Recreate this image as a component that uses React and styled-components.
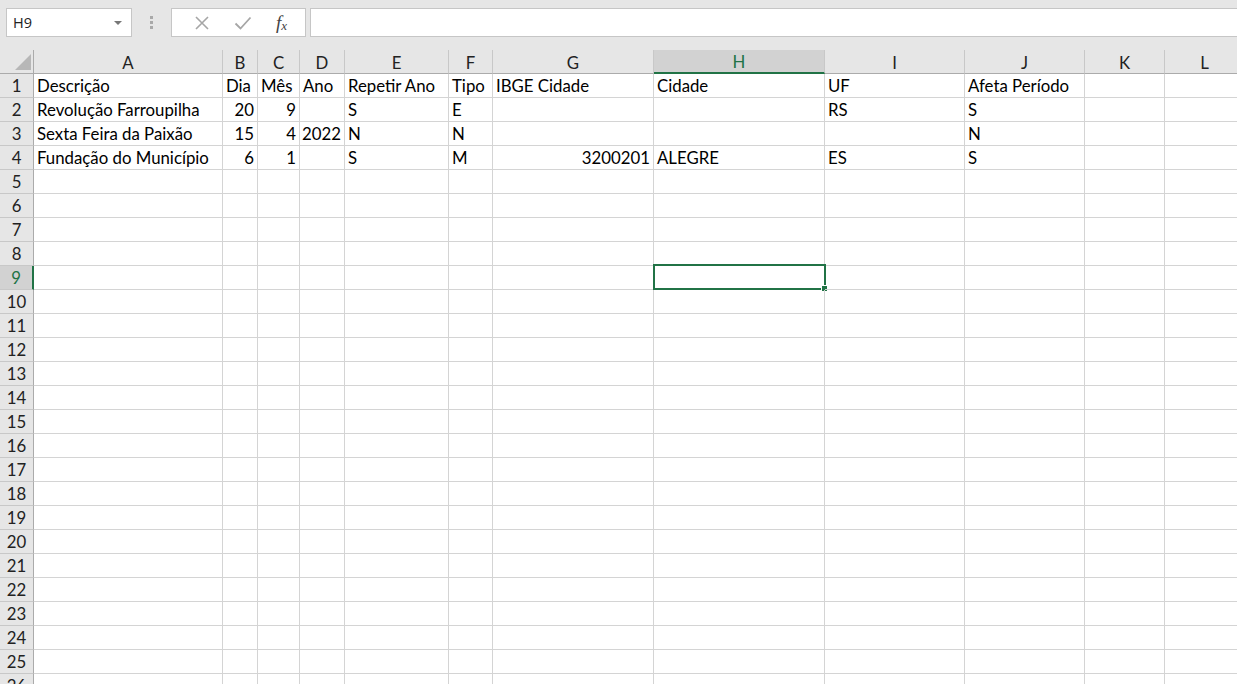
import React from "react";
import styled, { createGlobalStyle } from "styled-components";

const GlobalStyle = createGlobalStyle`
  html, body {
    margin: 0;
    padding: 0;
    background: #ffffff;
    overflow: hidden;
  }
  body {
    font-family: "Lato", "Open Sans", sans-serif;
  }
`;

const COLS = [
  { key: "A", w: 189 },
  { key: "B", w: 35 },
  { key: "C", w: 42 },
  { key: "D", w: 45 },
  { key: "E", w: 104 },
  { key: "F", w: 44 },
  { key: "G", w: 161 },
  { key: "H", w: 171 },
  { key: "I", w: 140 },
  { key: "J", w: 120 },
  { key: "K", w: 80 },
  { key: "L", w: 80 },
];

const DATA = {
  1: { A: "Descrição", B: "Dia", C: "Mês", D: "Ano", E: "Repetir Ano", F: "Tipo", G: "IBGE Cidade", H: "Cidade", I: "UF", J: "Afeta Período" },
  2: { A: "Revolução Farroupilha", B: 20, C: 9, E: "S", F: "E", I: "RS", J: "S" },
  3: { A: "Sexta Feira da Paixão", B: 15, C: 4, D: 2022, E: "N", F: "N", J: "N" },
  4: { A: "Fundação do Município", B: 6, C: 1, E: "S", F: "M", G: 3200201, H: "ALEGRE", I: "ES", J: "S" },
};

const SEL_COL = "H";
const SEL_ROW = 9;
const ROW_COUNT = 26;

const App = () => {
  const template = `34px ${COLS.map((c) => c.w + "px").join(" ")}`;
  const rows = Array.from({ length: ROW_COUNT }, (_, i) => i + 1);
  return (
    <>
      <GlobalStyle />
      <Window>
        <Toolbar>
          <NameBox>
            <span>H9</span>
            <Caret />
          </NameBox>
          <Grip>
            <i />
            <i />
            <i />
          </Grip>
          <FormulaButtons>
            <svg width="16" height="16" viewBox="0 0 16 16">
              <path d="M2 2 L14 14 M14 2 L2 14" stroke="#a6a6a6" strokeWidth="1.6" fill="none" />
            </svg>
            <svg width="18" height="16" viewBox="0 0 18 16">
              <path d="M1.5 8.5 L6.5 13.5 L16.5 2.5" stroke="#a6a6a6" strokeWidth="1.8" fill="none" />
            </svg>
            <Fx>
              f<sub>x</sub>
            </Fx>
          </FormulaButtons>
          <FormulaInput />
        </Toolbar>
        <Sheet style={{ gridTemplateColumns: template }}>
          <Corner>
            <svg width="16" height="16" viewBox="0 0 16 16">
              <path d="M16 0 L16 16 L0 16 Z" fill="#b7b7b7" />
            </svg>
          </Corner>
          {COLS.map((c) => (
            <ColHeader key={c.key} $active={c.key === SEL_COL}>
              {c.key}
            </ColHeader>
          ))}
          {rows.map((r) => (
            <React.Fragment key={r}>
              <RowHeader $active={r === SEL_ROW}>{r}</RowHeader>
              {COLS.map((c) => {
                const v = DATA[r] ? DATA[r][c.key] : undefined;
                const isNum = typeof v === "number";
                return (
                  <Cell key={c.key} $num={isNum}>
                    {v}
                    {r === SEL_ROW && c.key === SEL_COL && (
                      <Selection>
                        <Handle />
                      </Selection>
                    )}
                  </Cell>
                );
              })}
            </React.Fragment>
          ))}
        </Sheet>
      </Window>
    </>
  );
};

export default App;

const Window = styled.div`
  width: 1237px;
  height: 684px;
  overflow: hidden;
  background: #e6e6e6;
`;

const Toolbar = styled.div`
  display: flex;
  align-items: flex-start;
  height: 50px;
  padding: 8px 0 0 6px;
  box-sizing: border-box;
`;

const NameBox = styled.div`
  width: 126px;
  height: 29px;
  box-sizing: border-box;
  background: #fff;
  border: 1px solid #c6c6c6;
  display: flex;
  align-items: center;
  justify-content: space-between;
  padding: 0 9px 0 6px;
  font-family: "Open Sans", "Liberation Sans", sans-serif;
  font-size: 14.5px;
  color: #222;
`;

const Caret = styled.span`
  width: 0;
  height: 0;
  border-left: 4px solid transparent;
  border-right: 4px solid transparent;
  border-top: 4px solid #777;
`;

const Grip = styled.div`
  width: 39px;
  height: 29px;
  display: flex;
  flex-direction: column;
  align-items: center;
  justify-content: center;
  gap: 2px;
  i {
    width: 3px;
    height: 3px;
    background: #a9a9a9;
  }
`;

const FormulaButtons = styled.div`
  width: 135px;
  height: 29px;
  box-sizing: border-box;
  background: #fff;
  border: 1px solid #c6c6c6;
  display: flex;
  align-items: center;
  justify-content: space-around;
  padding: 0 6px 0 10px;
`;

const Fx = styled.span`
  font-family: "Liberation Serif", serif;
  font-style: italic;
  font-size: 19px;
  color: #444;
  sub {
    font-size: 13px;
    vertical-align: -1px;
  }
`;

const FormulaInput = styled.div`
  flex: 1;
  height: 29px;
  margin-left: 4px;
  background: #fff;
  border: 1px solid #c6c6c6;
  border-right: none;
  box-sizing: border-box;
`;

const Sheet = styled.div`
  display: grid;
  grid-auto-rows: 24px;
  grid-template-rows: 24px;
  background: #fff;
  font-family: "Lato", "Open Sans", sans-serif;
  font-size: 16.8px;
  color: #000;
`;

const HeaderBase = styled.div`
  background: #e6e6e6;
  display: flex;
  align-items: center;
  justify-content: center;
  box-sizing: border-box;
  font-family: "Lato", "Open Sans", sans-serif;
  font-size: 16.8px;
  color: #222;
`;

const Corner = styled(HeaderBase)`
  justify-content: flex-end;
  align-items: flex-end;
  padding: 0 2px 3px 0;
  border-right: 1px solid #ababab;
  border-bottom: 1px solid #ababab;
`;

const ColHeader = styled(HeaderBase)`
  border-right: 1px solid #c8c8c8;
  border-bottom: ${(p) => (p.$active ? "2px solid #217346" : "1px solid #ababab")};
  background: ${(p) => (p.$active ? "#d2d2d2" : "#e6e6e6")};
  color: ${(p) => (p.$active ? "#217346" : "#222")};
  padding-top: 1px;
`;

const RowHeader = styled(HeaderBase)`
  border-bottom: 1px solid #c8c8c8;
  border-right: ${(p) => (p.$active ? "2px solid #217346" : "1px solid #ababab")};
  background: ${(p) => (p.$active ? "#d2d2d2" : "#e6e6e6")};
  color: ${(p) => (p.$active ? "#217346" : "#222")};
`;

const Cell = styled.div`
  position: relative;
  box-sizing: border-box;
  border-right: 1px solid #d4d4d4;
  border-bottom: 1px solid #d4d4d4;
  display: flex;
  align-items: center;
  justify-content: ${(p) => (p.$num ? "flex-end" : "flex-start")};
  padding: 0 3px 0 3px;
  white-space: nowrap;
`;

const Selection = styled.div`
  position: absolute;
  left: -1px;
  top: -2px;
  right: -2px;
  bottom: -1px;
  border: 2px solid #217346;
  pointer-events: none;
`;

const Handle = styled.div`
  position: absolute;
  right: -4px;
  bottom: -4px;
  width: 5px;
  height: 5px;
  background: #217346;
  border: 1px solid #fff;
`;
